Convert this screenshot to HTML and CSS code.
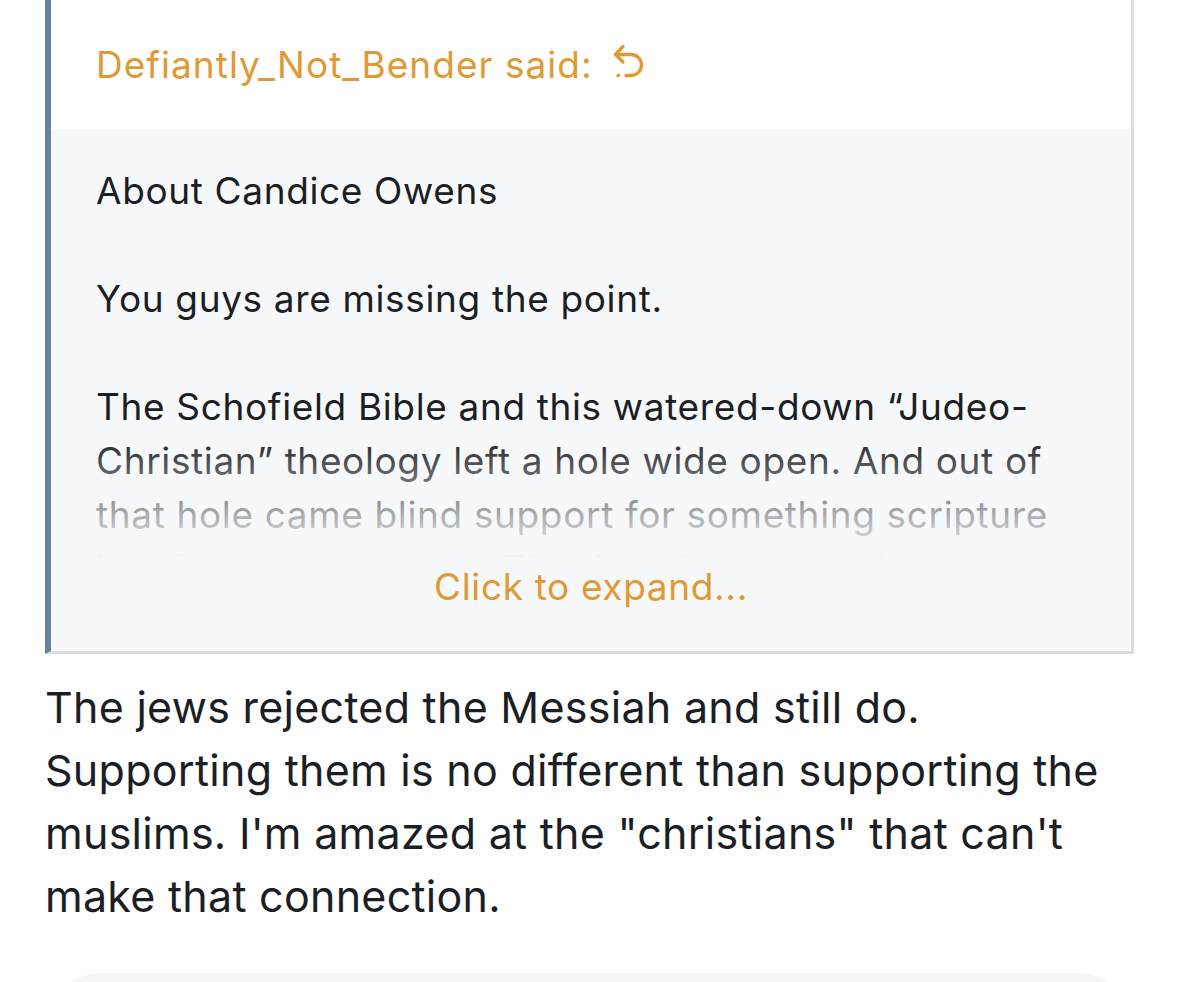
FILE: index.html
```html
<!DOCTYPE html>
<html lang="en">
<head>
<meta charset="utf-8">
<title>Post</title>
<link rel="stylesheet" href="styles.css">
</head>
<body>
<main class="post">
  <blockquote class="quote">
    <div class="quote-title">
      <a class="quote-author">Defiantly_Not_Bender said:</a>
      <svg class="quote-icon" viewBox="0 0 34 36" width="34" height="36" fill="none" stroke="currentColor" stroke-width="3.3" stroke-linecap="round" stroke-linejoin="round" aria-hidden="true">
        <path d="M11 2.500 3.500 10.500l7.500 7.500"/>
        <path d="M3.500 10.500H19a10.500 10.500 0 0 1 0 21H14"/>
        <path d="M6 31.500h.6"/>
      </svg>
    </div>
    <div class="quote-body">
      <div class="quote-content">
        <p>About Candice Owens</p>
        <p>You guys are missing the point.</p>
        <p>The Schofield Bible and this watered-down “Judeo-Christian” theology left a hole wide open. And out of that hole came blind support for something scripture itself never endorsed. That intoxicated loyalty to the state of</p>
      </div>
      <a class="expand-link">Click to expand...</a>
    </div>
  </blockquote>
  <p class="post-text">The jews rejected the Messiah and still do. Supporting them is no different than supporting the muslims. I'm amazed at the "christians" that can't make that connection.</p>
  <div class="next-card"></div>
</main>
</body>
</html>
```

FILE: styles.css
```css
html, body {
  margin: 0;
  height: 982px;
  overflow: hidden;
  background: #fefefe;
}
body {
  font-family: Inter, "Noto Sans", sans-serif;
  color: #1b1e25;
}
.post {
  padding: 0 45px;
}
.quote {
  margin: 0;
  height: 654px;
  box-sizing: border-box;
  display: flex;
  flex-direction: column;
  border-left: 6px solid #6781a3;
  border-right: 3px solid #d8dde6;
  border-bottom: 3px solid #d8dde6;
  font-size: 37px;
  line-height: 54px;
  letter-spacing: 0.64px;
  font-weight: 375;
}
.quote-title {
  height: 129px;
  flex: none;
  box-sizing: border-box;
  padding: 38px 45px 0 45px;
  display: flex;
  align-items: flex-start;
  gap: 19px;
  color: #e09a35;
  background: #fefefe;
}
.quote-author {
  letter-spacing: 1.03px;
}
.quote-icon {
  margin-top: 6px;
}
.quote-body {
  position: relative;
  flex: 1;
  overflow: hidden;
  background: #f7f8fa;
}
.quote-content {
  padding: 35px 45px 0 45px;
}
.quote-content p {
  margin: 0 0 54px;
}
.expand-link {
  position: absolute;
  left: 0;
  right: 0;
  bottom: 0;
  height: 216px;
  box-sizing: border-box;
  padding-top: 125px;
  text-align: center;
  color: #e09a35;
  background: linear-gradient(to bottom, rgba(247, 248, 250, 0), #f7f8fa 57%);
}
.post-text {
  margin: 22px 0 0;
  font-size: 43px;
  line-height: 63px;
  letter-spacing: 0.27px;
  font-weight: 375;
}
.next-card {
  margin-top: 45px;
  height: 120px;
  border-radius: 57px;
  background: #f5f6f8;
}
```
